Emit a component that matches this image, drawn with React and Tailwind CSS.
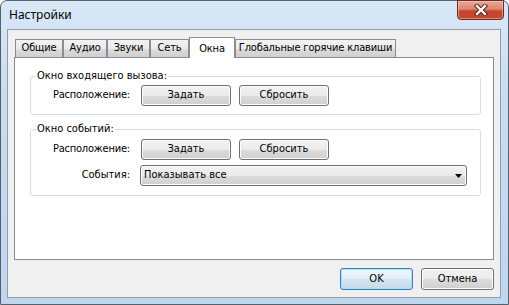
import React from "react";

const face =
  "rounded-[3px] border border-[#707070] bg-[linear-gradient(#f2f2f2_0%,#ebebeb_50%,#dddddd_51%,#cfcfcf_100%)] shadow-[inset_0_0_0_1px_#fcfcfc] text-[11px] text-black";

function Button({ children, className = "" }) {
  return <div className={`flex items-center justify-center ${face} ${className}`}>{children}</div>;
}

function CloseButton() {
  return (
    <div className="-mt-px -mr-[3px] w-[47px] h-[20px] rounded-b-[4px] border border-[#6d2a1e] bg-[linear-gradient(#e9a797_0%,#dc8771_45%,#c9452c_55%,#c14a32_100%)] shadow-[inset_0_0_0_1px_rgba(255,220,210,0.45)] flex items-center justify-center">
      <svg width="14" height="12" viewBox="0 0 14 12">
        <path d="M3 2 L11 10 M11 2 L3 10" stroke="#4b1b12" strokeWidth="4.2" strokeLinecap="square" fill="none" />
        <path d="M3 2 L11 10 M11 2 L3 10" stroke="#ffffff" strokeWidth="2.4" strokeLinecap="square" fill="none" />
      </svg>
    </div>
  );
}

function Tab({ children, w, selected }) {
  if (selected) {
    return (
      <div
        className={`${w} h-[21px] -mb-px relative z-10 bg-white border border-b-0 border-[#898c95] flex items-start justify-center pt-[3px] text-[11px]`}
      >
        {children}
      </div>
    );
  }
  return (
    <div
      className={`${w} h-[18px] border border-b-0 border-[#898c95] bg-[linear-gradient(#f2f2f2_0%,#ebebeb_50%,#dddddd_51%,#cfcfcf_100%)] flex items-center justify-center text-[11px]`}
    >
      {children}
    </div>
  );
}

function Group({ label, className = "", children }) {
  return (
    <div className={`relative ml-[15px] w-[451px] rounded-[3px] border border-[#d5dfe5] ${className}`}>
      <span className="absolute -top-[8px] left-[5px] bg-white px-[1px] text-[11px] leading-[14px]">
        {label}
      </span>
      {children}
    </div>
  );
}

export default function App() {
  return (
    <div
      className="w-[509px] h-[305px] bg-white text-black"
      style={{ fontFamily: '"DejaVu Sans Condensed", "Liberation Sans", sans-serif' }}
    >
      <div className="w-full h-full flex flex-col rounded-t-[7px] border border-[#55606c] bg-[linear-gradient(#d9e8f7_0%,#c9ddf1_30%,#c0d6ed_100%)] pl-[6px] pr-[7px] pb-[6px]">
        <div className="h-[28px] flex items-start justify-between shrink-0">
          <span
            className="mt-[6px] ml-[2px] text-[12px] leading-[16px]"
            style={{ fontFamily: '"Noto Sans", "Open Sans", sans-serif' }}
          >
            Настройки
          </span>
          <CloseButton />
        </div>
        <div className="flex-1 border border-[#8e9eb0] bg-[#f0f0f0] flex flex-col">
          <div className="pt-[7px] pl-[7px] flex items-end h-[27px] tracking-[-0.15px]">
            <Tab w="w-[48px]">Общие</Tab>
            <Tab w="w-[44px]">Аудио</Tab>
            <Tab w="w-[43px]">Звуки</Tab>
            <Tab w="w-[39px]">Сеть</Tab>
            <Tab w="w-[46px]" selected>
              Окна
            </Tab>
            <Tab w="w-[161px]">Глобальные горячие клавиши</Tab>
          </div>
          <div className="ml-[6px] w-[480px] h-[203px] border border-[#898c95] bg-white flex flex-col">
            <Group label="Окно входящего вызова:" className="mt-[18px] h-[39px] pt-[8px]">
              <div className="flex items-center h-[21px]">
                <div className="w-[99px] text-right text-[11px] tracking-[-0.2px]">Расположение:</div>
                <Button className="ml-[11px] w-[90px] h-[21px]">Задать</Button>
                <Button className="ml-[8px] w-[90px] h-[21px]">Сбросить</Button>
              </div>
            </Group>
            <Group label="Окно событий:" className="mt-[14px] h-[67px] pt-[9px]">
              <div className="flex items-center h-[21px]">
                <div className="w-[99px] text-right text-[11px] tracking-[-0.2px]">Расположение:</div>
                <Button className="ml-[11px] w-[90px] h-[21px]">Задать</Button>
                <Button className="ml-[8px] w-[90px] h-[21px]">Сбросить</Button>
              </div>
              <div className="flex items-center h-[21px] mt-[5px]">
                <div className="w-[99px] text-right text-[11px]">События:</div>
                <div className={`flex items-center justify-between ${face} ml-[10px] w-[327px] h-[21px] pl-[3px] pr-[4px]`}>
                  <span>Показывать все</span>
                  <svg width="7" height="4" viewBox="0 0 7 4">
                    <path d="M0 0 H7 L3.5 4 Z" fill="#000" />
                  </svg>
                </div>
              </div>
            </Group>
          </div>
          <div className="flex justify-end gap-[8px] pr-[6px] mt-[8px]">
            <div className="flex items-center justify-center w-[73px] h-[22px] rounded-[3px] border border-[#3c7fb1] bg-[linear-gradient(#eef6fc_0%,#e2eef8_50%,#d3e4f2_51%,#c5daec_100%)] shadow-[inset_0_0_0_1px_#a8e2fa] text-[11px]">
              OK
            </div>
            <Button className="w-[73px] h-[22px]">Отмена</Button>
          </div>
        </div>
      </div>
    </div>
  );
}
